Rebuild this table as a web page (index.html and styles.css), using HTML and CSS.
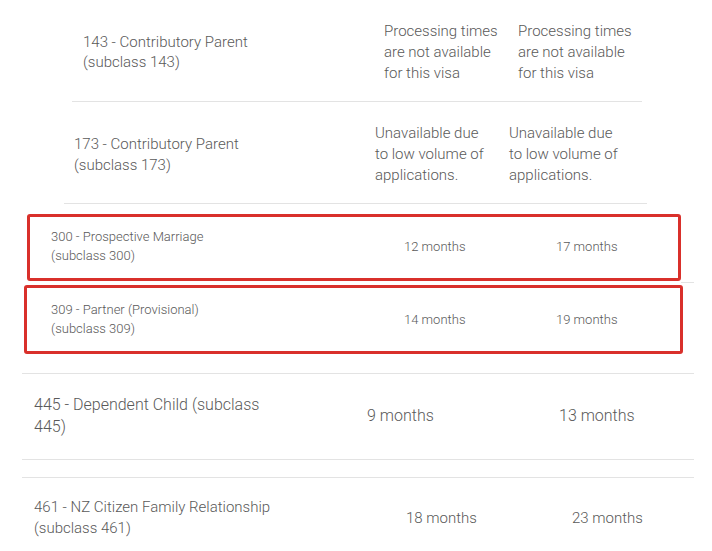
FILE: index.html
```html
<!DOCTYPE html>
<html lang="en">
<head>
<meta charset="utf-8">
<title>Visa processing times</title>
<link rel="stylesheet" href="styles.css">
</head>
<body>
<div class="row r143">
  <div class="name">143 - Contributory Parent<br>(subclass 143)</div>
  <div class="cell">Processing times<br>are not available<br>for this visa</div>
  <div class="cell">Processing times<br>are not available<br>for this visa</div>
</div>
<div class="row r173">
  <div class="name">173 - Contributory Parent<br>(subclass 173)</div>
  <div class="cell">Unavailable due<br>to low volume of<br>applications.</div>
  <div class="cell">Unavailable due<br>to low volume of<br>applications.</div>
</div>
<div class="row hl hl1">
  <div class="name">300 - Prospective Marriage<br>(subclass 300)</div>
  <div class="cell">12 months</div>
  <div class="cell">17 months</div>
</div>
<div class="stub"></div>
<div class="row hl hl2">
  <div class="name">309 - Partner (Provisional)<br>(subclass 309)</div>
  <div class="cell">14 months</div>
  <div class="cell">19 months</div>
</div>
<div class="row r445">
  <div class="name">445 - Dependent Child (subclass<br>445)</div>
  <div class="cell">9 months</div>
  <div class="cell">13 months</div>
</div>
<div class="row r461">
  <div class="name">461 - NZ Citizen Family Relationship<br>(subclass 461)</div>
  <div class="cell">18 months</div>
  <div class="cell">23 months</div>
</div>
</body>
</html>
```
FILE: styles.css
```css
html, body {
  margin: 0;
  padding: 0;
  background: #ffffff;
}
body {
  font-family: Roboto, "Liberation Sans", sans-serif;
  font-weight: 300;
  color: #595959;
  overflow: hidden;
}
.row {
  display: grid;
  align-items: center;
  box-sizing: border-box;
}
.r143 {
  margin-left: 72px;
  width: 570px;
  grid-template-columns: 312px 134px 1fr;
  padding: 21px 0 17px;
  border-bottom: 1px solid #e3e3e3;
  font-size: 15px;
  line-height: 21px;
}
.r143 .name { padding-left: 11px; line-height: 20px; padding-bottom: 1px; }
.r173 {
  margin-left: 64px;
  width: 583px;
  grid-template-columns: 311px 134px 1fr;
  padding: 21px 0 17px;
  border-bottom: 1px solid #e3e3e3;
  font-size: 15px;
  line-height: 21px;
}
.r173 .name { padding-left: 10px; }
.hl {
  border: 3px solid #d9302b;
  border-radius: 3px;
  font-size: 13px;
  line-height: 19px;
}
.hl1 {
  margin-top: 10px;
  margin-left: 27px;
  width: 654px;
  height: 67px;
  grid-template-columns: 374px 152px 1fr;
  padding: 0 0 3px;
}
.hl1 .name { padding-left: 21px; padding-bottom: 1px; }
.stub {
  margin: 1px 0 0 681px;
  width: 13px;
  height: 1px;
  background: #e3e3e3;
}
.hl2 {
  margin-top: 2px;
  margin-left: 24px;
  width: 659px;
  height: 69px;
  grid-template-columns: 377px 152px 1fr;
  padding: 0 0 1px;
}
.hl2 .name { padding-left: 24px; }
.r445 {
  margin-top: 19px;
  margin-left: 22px;
  width: 672px;
  grid-template-columns: 345px 192px 1fr;
  padding: 20px 0 21px;
  border-top: 1px solid #e3e3e3;
  border-bottom: 1px solid #e3e3e3;
  font-size: 16px;
  line-height: 22px;
}
.r445 .name { padding-left: 12px; }
.r461 {
  margin-top: 17px;
  margin-left: 22px;
  width: 672px;
  grid-template-columns: 384px 166px 1fr;
  padding: 19px 0 20px;
  border-top: 1px solid #e3e3e3;
  font-size: 15px;
  line-height: 21px;
}
.r461 .name { padding-left: 12px; }
```
